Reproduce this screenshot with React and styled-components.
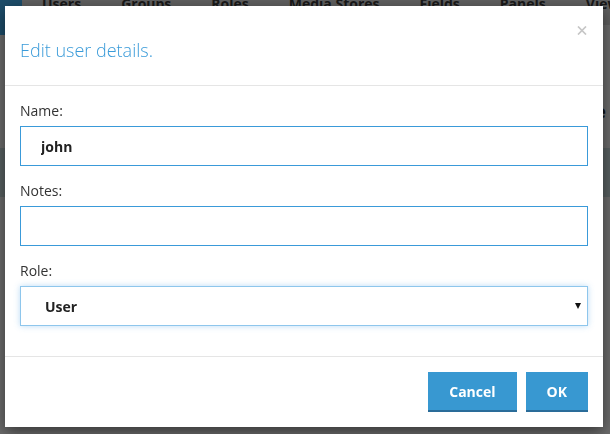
import React from "react";
import styled, { createGlobalStyle } from "styled-components";

const GlobalStyle = createGlobalStyle`
  html, body { margin: 0; padding: 0; }
  body {
    font-family: "Open Sans", "Liberation Sans", sans-serif;
    background: #d9d9d9;
    overflow: hidden;
  }
  * { box-sizing: border-box; }
`;

const Page = styled.div`
  height: 434px;
  background: #d9d9d9;
  overflow: hidden;
`;

const TopBar = styled.div`
  display: flex;
  align-items: flex-start;
`;

const Logo = styled.div`
  flex: none;
  width: 22px;
  height: 35px;
  background: #3a9ad4;
`;

const Tabs = styled.nav`
  flex: 1;
  display: flex;
  height: 25px;
  background: #c0c0c0;
  overflow: hidden;
`;

const Tab = styled.span`
  padding: 0 20px;
  margin-top: -6px;
  font-size: 14px;
  font-weight: 700;
  line-height: 20px;
  color: #333;
  white-space: nowrap;
`;

const HeadingRow = styled.div`
  display: flex;
  justify-content: flex-end;
  margin-top: 64px;
  padding-right: 4px;
  font-size: 18px;
  font-weight: 700;
  line-height: 24px;
  color: #222;
`;

const Band = styled.div`
  margin-top: 25px;
  height: 49px;
  background: #b2c2c4;
`;

const Backdrop = styled.div`
  position: fixed;
  inset: 0;
  background: rgba(0, 0, 0, 0.5);
`;

const Modal = styled.div`
  position: fixed;
  left: 5px;
  top: 6px;
  width: 598px;
  background: #fff;
  box-shadow: 0 5px 15px rgba(0, 0, 0, 0.5);
`;

const Header = styled.div`
  position: relative;
  padding: 31px 15px 22px;
  border-bottom: 1px solid #e5e5e5;
`;

const Title = styled.h4`
  margin: 0;
  font-size: 18px;
  font-weight: 300;
  line-height: 26px;
  color: #3a9bd9;
`;

const Close = styled.button`
  position: absolute;
  top: 20px;
  right: 16px;
  width: 10px;
  height: 9px;
  padding: 0;
  border: 0;
  background: none;
  display: flex;
  cursor: pointer;
`;

const Body = styled.div`
  padding: 15px;
`;

const Group = styled.div`
  margin-bottom: 15px;
`;

const Label = styled.label`
  display: block;
  margin-bottom: 5px;
  font-size: 14px;
  line-height: 20px;
  color: #333;
`;

const TextInput = styled.input`
  display: block;
  width: 100%;
  height: 40px;
  padding: 0 20px;
  border: 1px solid #3a9ad9;
  border-radius: 0;
  outline: none;
  font-family: inherit;
  font-size: 14px;
  font-weight: 700;
  color: #222;
  background: #fff;
`;

const SelectWrap = styled.div`
  position: relative;
`;

const Select = styled.select`
  display: block;
  width: 100%;
  height: 40px;
  padding: 0 24px;
  border: 1px solid #8ec6ec;
  border-radius: 0;
  box-shadow: 0 0 6px rgba(102, 175, 233, 0.45);
  appearance: none;
  -webkit-appearance: none;
  outline: none;
  font-family: inherit;
  font-size: 14px;
  font-weight: 700;
  color: #222;
  background: #fff;
`;

const Caret = styled.span`
  position: absolute;
  right: 7px;
  top: 17px;
  width: 0;
  height: 0;
  border-left: 3px solid transparent;
  border-right: 3px solid transparent;
  border-top: 6px solid #111;
  pointer-events: none;
`;

const Footer = styled.div`
  display: flex;
  justify-content: flex-end;
  gap: 9px;
  padding: 15px;
  border-top: 1px solid #e5e5e5;
`;

const Button = styled.button`
  height: 40px;
  padding: 0 21px;
  border: 0;
  border-bottom: 2px solid #2a6c99;
  border-radius: 0;
  background: #3898d1;
  color: #fff;
  font-family: inherit;
  font-size: 14px;
  font-weight: 700;
  cursor: pointer;
`;

export default function App() {
  return (
    <>
      <GlobalStyle />
      <Page>
        <TopBar>
          <Logo />
          <Tabs>
            <Tab>Users</Tab>
            <Tab>Groups</Tab>
            <Tab>Roles</Tab>
            <Tab>Media Stores</Tab>
            <Tab>Fields</Tab>
            <Tab>Panels</Tab>
            <Tab>Views</Tab>
          </Tabs>
        </TopBar>
        <HeadingRow>Create</HeadingRow>
        <Band />
      </Page>
      <Backdrop />
      <Modal role="dialog">
        <Header>
          <Title>Edit user details.</Title>
          <Close aria-label="Close">
            <svg width="10" height="9" viewBox="0 0 10 9">
              <path d="M1 0.5 L9 8.5 M9 0.5 L1 8.5" stroke="#c6c6c6" strokeWidth="1.7" fill="none" />
            </svg>
          </Close>
        </Header>
        <Body>
          <Group>
            <Label>Name:</Label>
            <TextInput defaultValue="john" />
          </Group>
          <Group>
            <Label>Notes:</Label>
            <TextInput defaultValue="" />
          </Group>
          <Group>
            <Label>Role:</Label>
            <SelectWrap>
              <Select defaultValue="User">
                <option>User</option>
                <option>Admin</option>
              </Select>
              <Caret />
            </SelectWrap>
          </Group>
        </Body>
        <Footer>
          <Button>Cancel</Button>
          <Button>OK</Button>
        </Footer>
      </Modal>
    </>
  );
}
